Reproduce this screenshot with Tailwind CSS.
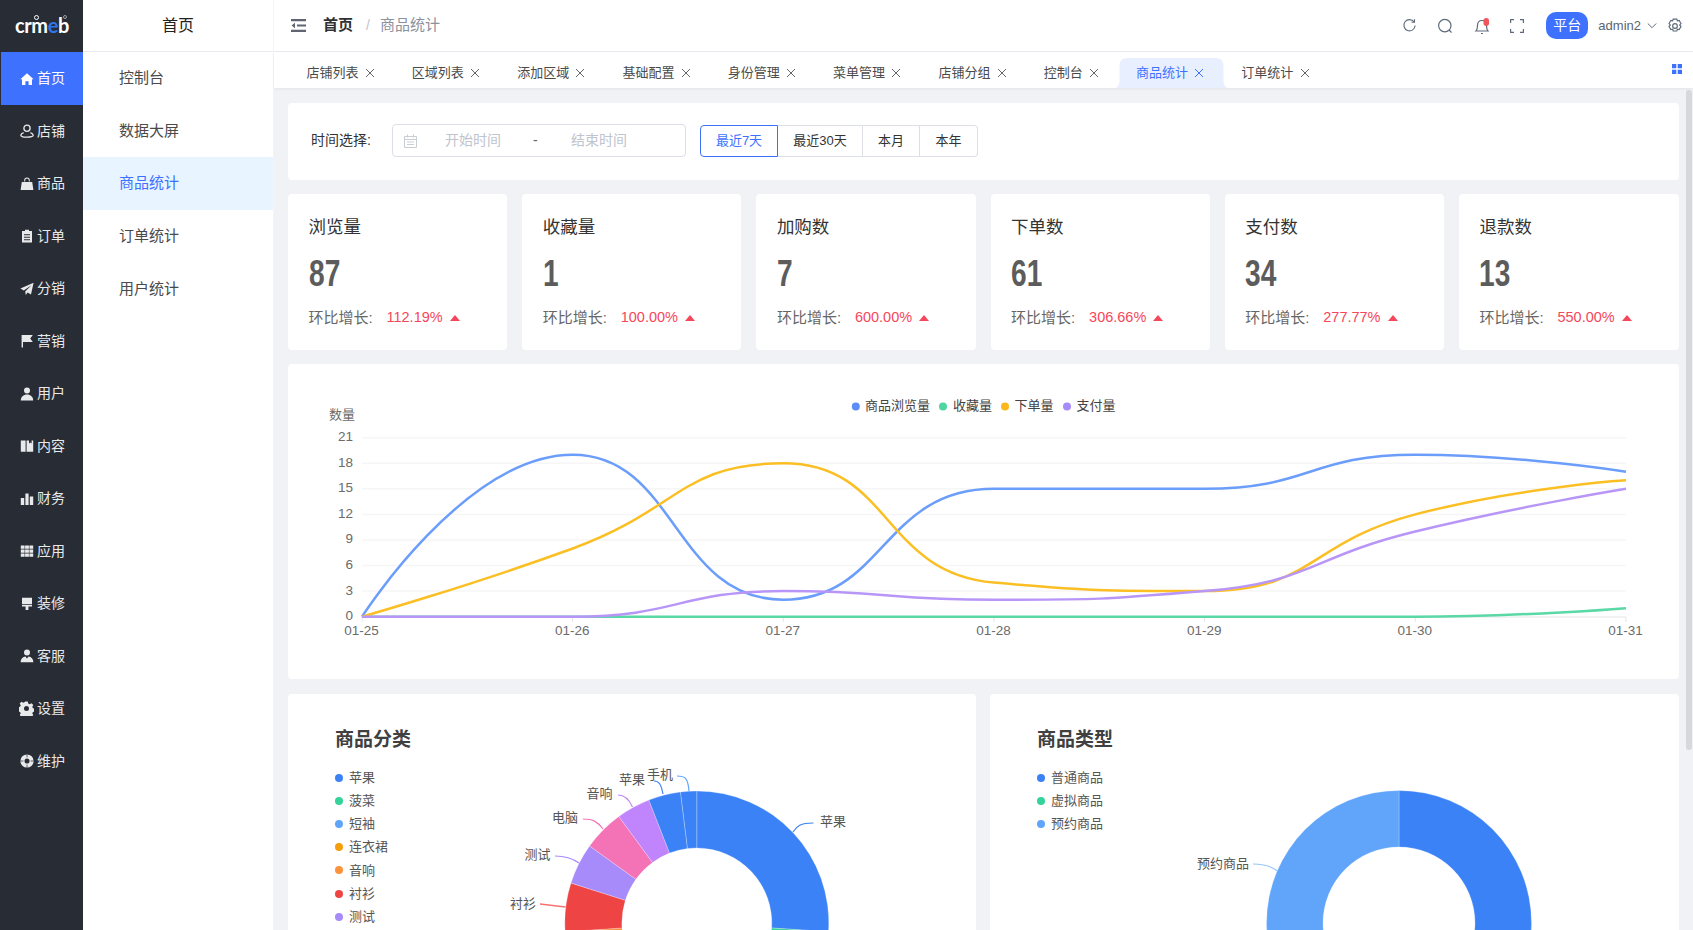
<!DOCTYPE html>
<html lang="zh">
<head>
<meta charset="utf-8">
<title>商品统计</title>
<script src="https://cdn.jsdelivr.net/npm/@tailwindcss/browser@4"></script>
</head>
<body class="m-0 h-[930px] w-[1693px] overflow-hidden bg-white font-['Liberation_Sans','Noto_Sans_CJK_SC',sans-serif] text-[14px] text-[#515a6e]">
<div class="flex h-[930px] w-[1693px]">

  <!-- primary sidebar -->
  <aside class="flex h-full w-[83px] shrink-0 flex-col bg-[#282c34] text-[14px] text-[#e8e9eb]">
    <div class="relative flex h-[52px] items-center pl-[15px] pb-[2px]">
      <span class="font-['Lato',sans-serif] text-[20px] leading-none font-bold tracking-[-0.4px] text-white">crm<span class="text-[#2f76e6]">e</span>b</span>
      <span class="absolute left-[34px] top-[15px] h-[5px] w-[5px] rounded-full border border-white"></span>
      <span class="absolute left-[63px] top-[15px] h-[4px] w-[4px] rounded-full border border-[#9aa0a8]"></span>
    </div>
    <a class="ml-px flex h-[53px] items-center gap-[3px] bg-[#3f71ff] pl-[19px] text-white">
      <svg class="h-[14px] w-[14px]" viewBox="0 0 14 14" fill="currentColor"><path d="M7 1.2 13.6 7.2H12V13H8.6V9.2H5.4V13H2V7.2H.4Z"/></svg><span>首页</span></a>
    <a class="flex h-[52.5px] items-center gap-[3px] pl-[20px]">
      <svg class="h-[14px] w-[14px]" viewBox="0 0 14 14" fill="none" stroke="currentColor" stroke-width="1.3"><circle cx="7" cy="4.2" r="3.1"/><path d="M3.6 8.6C1.5 9.4.8 10.4.8 11.2c0 1.2 2.6 1.9 6.2 1.9s6.2-.7 6.2-1.9c0-.8-.7-1.8-2.8-2.6"/></svg><span>店铺</span></a>
    <a class="flex h-[52.5px] items-center gap-[3px] pl-[20px]">
      <svg class="h-[14px] w-[14px]" viewBox="0 0 14 14" fill="currentColor"><path d="M4.2 4.6V3.4a2.8 2.8 0 0 1 5.6 0v1.2h-1V3.4a1.8 1.8 0 0 0-3.6 0v1.2ZM1.8 5h10.4l1.2 8H.6Z"/></svg><span>商品</span></a>
    <a class="flex h-[52.5px] items-center gap-[3px] pl-[20px]">
      <svg class="h-[14px] w-[14px]" viewBox="0 0 14 14" fill="currentColor"><path fill-rule="evenodd" d="M5 .8h4V2h3v11.6H2V2h3ZM4 5.2v1h6v-1Zm0 2.6v1h6v-1Zm0 2.4v1h6v-1Z"/></svg><span>订单</span></a>
    <a class="flex h-[52.5px] items-center gap-[3px] pl-[20px]">
      <svg class="h-[14px] w-[14px]" viewBox="0 0 14 14" fill="currentColor"><path d="M13.6.8 11 12.6 7.6 10.4 5.8 13 5.2 9.4 11.4 3.2 3.8 8.6.4 6.6Z"/></svg><span>分销</span></a>
    <a class="flex h-[52.5px] items-center gap-[3px] pl-[20px]">
      <svg class="h-[14px] w-[14px]" viewBox="0 0 14 14" fill="currentColor"><path d="M1.6 1h11.2l-2.6 3.6 2.6 3.4H3v5.4H1.6Z"/></svg><span>营销</span></a>
    <a class="flex h-[52.5px] items-center gap-[3px] pl-[20px]">
      <svg class="h-[14px] w-[14px]" viewBox="0 0 14 14" fill="currentColor"><circle cx="7" cy="3.6" r="3"/><path d="M.8 13.4c0-3.6 2.6-6 6.2-6s6.2 2.400 6.200 6Z"/></svg><span>用户</span></a>
    <a class="flex h-[52.5px] items-center gap-[3px] pl-[20px]">
      <svg class="h-[14px] w-[14px]" viewBox="0 0 14 14" fill="currentColor"><path d="M.8 1.400h4.800v11.400H.8ZM6.600 1.400H9v3l1.300-1 1.300 1v-3h1.600v11.400H6.600Z"/></svg><span>内容</span></a>
    <a class="flex h-[52.5px] items-center gap-[3px] pl-[20px]">
      <svg class="h-[14px] w-[14px]" viewBox="0 0 14 14" fill="currentColor"><path d="M.8 6h3.400v7H.8ZM5.400 1.400h3.200V13H5.400ZM9.800 4.400h3.400V13H9.800Z"/></svg><span>财务</span></a>
    <a class="flex h-[52.5px] items-center gap-[3px] pl-[20px]">
      <svg class="h-[14px] w-[14px]" viewBox="0 0 14 14" fill="currentColor"><path d="M.8 1.400h3.800v3.400H.8ZM5.100 1.400h3.800v3.400H5.100ZM9.400 1.400h3.800v3.400H9.400ZM.8 5.400h3.800v3.400H.8ZM5.100 5.400h3.800v3.400H5.100ZM9.400 5.400h3.800v3.400H9.400ZM.8 9.400h3.800v3.400H.8ZM5.100 9.400h3.800v3.400H5.100ZM9.400 9.400h3.800v3.400H9.400Z"/></svg><span>应用</span></a>
    <a class="flex h-[52.5px] items-center gap-[3px] pl-[20px]">
      <svg class="h-[14px] w-[14px]" viewBox="0 0 14 14" fill="currentColor"><path d="M2 .8h10v6.400H2ZM2 8h10v1.400H8.400V13H5.600V9.400H2Z"/></svg><span>装修</span></a>
    <a class="flex h-[52.5px] items-center gap-[3px] pl-[20px]">
      <svg class="h-[14px] w-[14px]" viewBox="0 0 14 14" fill="currentColor"><circle cx="7" cy="3.600" r="3"/><path d="M.6 13.200c0-3.400 2.200-5.400 4.800-5.800L7 9.400l1.600-2c2.600.4 4.800 2.400 4.800 5.800ZM6.500 10 7 9.600l.5.4.4 2.400H6.100Z"/></svg><span>客服</span></a>
    <a class="flex h-[52.5px] items-center gap-[3px] pl-[19px]">
      <svg class="h-[15px] w-[15px]" viewBox="0 0 15 15" fill="currentColor"><path fill-rule="evenodd" d="M6.200.5h2.600l.4 2 1.500.7 1.800-1 1.800 1.900-1 1.700.6 1.500 2 .5v2.600l-2 .5-.6 1.500 1 1.700-1.800 1.900-1.800-1-1.500.6-.4 2H6.200l-.4-2-1.500-.6-1.800 1-1.800-1.900 1-1.700-.6-1.500-2-.5V6.300l2-.5.6-1.500-1-1.700L2.500 .7l1.800 1 1.500-.7ZM7.500 5a2.500 2.500 0 1 0 0 5 2.500 2.500 0 0 0 0-5Z"/></svg><span>设置</span></a>
    <a class="flex h-[52.5px] items-center gap-[3px] pl-[20px]">
      <svg class="h-[14px] w-[14px]" viewBox="0 0 14 14"><circle cx="7" cy="7" r="6.600" fill="currentColor"/><circle cx="7" cy="7" r="2.500" fill="#282c34"/><path d="M7 .4v3M7 10.600v3M.4 7h3M10.600 7h3" stroke="#282c34" stroke-width=".7"/></svg><span>维护</span></a>
  </aside>

  <!-- secondary sidebar -->
  <aside class="flex h-full w-[190px] shrink-0 flex-col bg-white text-[15px] text-[#4a4a4a]">
    <div class="flex h-[52px] items-center justify-center border-b border-[#e9ebf0] text-[16px] text-[#222]">首页</div>
    <a class="flex h-[52.5px] items-center pl-[36px]">控制台</a>
    <a class="flex h-[52.5px] items-center pl-[36px] pt-[1px]">数据大屏</a>
    <a class="flex h-[53px] items-center bg-[#e8f4ff] pl-[36px] text-[#3f71ff]">商品统计</a>
    <a class="flex h-[52.5px] items-center pl-[36px]">订单统计</a>
    <a class="flex h-[52.5px] items-center pl-[36px]">用户统计</a>
  </aside>

  <!-- main -->
  <main class="relative flex h-full min-w-0 flex-1 flex-col border-l border-[#f3f4f6]">
    <header class="flex h-[52px] shrink-0 items-center border-b border-[#e9ebf0] pl-[17px] pr-[10px]">
      <svg class="h-[13px] w-[15px]" viewBox="0 0 15 13" fill="#5f6672"><path d="M0 0h15v2.200H0ZM6 5.400h9v2.200H6ZM0 10.800h15V13H0ZM4 3.700v5.600L.6 6.500Z"/></svg>
      <span class="ml-[17px] text-[15px] font-bold text-[#303133]">首页</span>
      <span class="ml-[13px] text-[14px] text-[#c0c4cc]">/</span>
      <span class="ml-[10px] text-[15px] text-[#8b929e]">商品统计</span>
      <div class="ml-auto flex items-center">
        <svg class="h-[15px] w-[15px]" viewBox="0 0 16 16" fill="none" stroke="#5f6b7a" stroke-width="1.200"><path d="M12.900 4.200A6 6 0 1 0 14 8"/><path d="M13.300 1.300v3.200h-3.200" /></svg>
        <svg class="ml-[20px] h-[16px] w-[16px]" viewBox="0 0 16 16" fill="none" stroke="#5f6b7a" stroke-width="1.200"><circle cx="7.800" cy="7.600" r="6.200"/><path d="m12.200 12 2.300 2.600"/></svg>
        <svg class="ml-[20px] h-[18px] w-[18px]" viewBox="0 0 18 18" fill="none"><path d="M3 14c1.200-1.300 1.500-2.500 1.500-5.500C4.500 5.500 6.300 3.500 9 3.500s4.500 2 4.500 5c0 3 .3 4.200 1.500 5.500Z" stroke="#5f6b7a" stroke-width="1.200"/><path d="M8 16.500h2" stroke="#5f6b7a" stroke-width="1.200"/><rect x="10.500" y="1" width="5.500" height="8" rx="2.750" fill="#f0545c"/></svg>
        <svg class="ml-[19px] h-[14px] w-[14px]" viewBox="0 0 14 14" fill="none" stroke="#5f6b7a" stroke-width="1.200"><path d="M.6 4V.6H4M10 .6h3.400V4M13.400 10v3.400H10M4 13.400H.6V10"/></svg>
        <span class="ml-[22px] flex h-[27px] w-[42px] items-center justify-center rounded-[10px] bg-[#3f71ff] text-[14px] text-white">平台</span>
        <span class="ml-[10px] text-[13px] text-[#5a6472]">admin2</span>
        <svg class="ml-[6px] h-[8px] w-[10px]" viewBox="0 0 10 8" fill="none" stroke="#5f6b7a" stroke-width="1"><path d="m.8 1.500 4.200 4.200 4.200-4.200"/></svg>
        <svg class="ml-[10px] h-[16px] w-[16px]" viewBox="0 0 15 15" fill="none" stroke="#5f6b7a" stroke-width="1.100"><path d="M5.800 1h3.400l.5 1.700 1.700-.4 1.700 2.900-1.200 1.300 1.200 1.500-1.700 2.900-1.700-.4-.5 1.700H5.800l-.5-1.700-1.700.4-1.700-2.900 1.200-1.500L1.900 5.200l1.700-2.900 1.700.4Z"/><circle cx="7.500" cy="7.500" r="2.200"/></svg>
      </div>
    </header>

    <nav class="relative z-10 flex h-[36px] shrink-0 bg-white pl-[15.500px] text-[13px] text-[#4a4a4a] shadow-[0_1px_3px_rgba(0,0,0,0.06)]">
      <a class="mt-[6px] flex h-[30px] items-center gap-[6.300px] pl-[17px] pr-[20px]">店铺列表<svg class="h-[10px] w-[10px]" viewBox="0 0 10 10" stroke="#666" stroke-width="1"><path d="m1 1 8 8M9 1 1 9"/></svg></a>
      <a class="mt-[6px] flex h-[30px] items-center gap-[6.300px] pl-[17px] pr-[20px]">区域列表<svg class="h-[10px] w-[10px]" viewBox="0 0 10 10" stroke="#666" stroke-width="1"><path d="m1 1 8 8M9 1 1 9"/></svg></a>
      <a class="mt-[6px] flex h-[30px] items-center gap-[6.300px] pl-[17px] pr-[20px]">添加区域<svg class="h-[10px] w-[10px]" viewBox="0 0 10 10" stroke="#666" stroke-width="1"><path d="m1 1 8 8M9 1 1 9"/></svg></a>
      <a class="mt-[6px] flex h-[30px] items-center gap-[6.300px] pl-[17px] pr-[20px]">基础配置<svg class="h-[10px] w-[10px]" viewBox="0 0 10 10" stroke="#666" stroke-width="1"><path d="m1 1 8 8M9 1 1 9"/></svg></a>
      <a class="mt-[6px] flex h-[30px] items-center gap-[6.300px] pl-[17px] pr-[20px]">身份管理<svg class="h-[10px] w-[10px]" viewBox="0 0 10 10" stroke="#666" stroke-width="1"><path d="m1 1 8 8M9 1 1 9"/></svg></a>
      <a class="mt-[6px] flex h-[30px] items-center gap-[6.300px] pl-[17px] pr-[20px]">菜单管理<svg class="h-[10px] w-[10px]" viewBox="0 0 10 10" stroke="#666" stroke-width="1"><path d="m1 1 8 8M9 1 1 9"/></svg></a>
      <a class="mt-[6px] flex h-[30px] items-center gap-[6.300px] pl-[17px] pr-[20px]">店铺分组<svg class="h-[10px] w-[10px]" viewBox="0 0 10 10" stroke="#666" stroke-width="1"><path d="m1 1 8 8M9 1 1 9"/></svg></a>
      <a class="mt-[6px] flex h-[30px] items-center gap-[6.300px] pl-[17px] pr-[20px]">控制台<svg class="h-[10px] w-[10px]" viewBox="0 0 10 10" stroke="#666" stroke-width="1"><path d="m1 1 8 8M9 1 1 9"/></svg></a>
      <a class="relative mt-[6px] flex h-[30px] items-center gap-[6.300px] pl-[17px] pr-[20px] text-[#3f71ff]">
        <svg class="absolute -left-[4px] top-0 h-[30px] w-[114px]" viewBox="0 0 114 30" fill="#e8efff"><path d="M0 30c3 0 4-3 4.500-7V8q0-8 8-8h88q8 0 8 8v15c.5 4 2 7 5.500 7Z"/></svg>
        <span class="relative">商品统计</span>
        <svg class="relative h-[10px] w-[10px]" viewBox="0 0 10 10" stroke="#3f71ff" stroke-width="1"><path d="m1 1 8 8M9 1 1 9"/></svg></a>
      <a class="mt-[6px] flex h-[30px] items-center gap-[6.300px] pl-[17px] pr-[20px]">订单统计<svg class="h-[10px] w-[10px]" viewBox="0 0 10 10" stroke="#666" stroke-width="1"><path d="m1 1 8 8M9 1 1 9"/></svg></a>
      <svg class="ml-auto mr-[11px] -mt-[2px] h-[10px] w-[10px] self-center" viewBox="0 0 10 10" fill="#3f71ff"><path d="M0 0h4.300v4.300H0ZM5.700 0H10v4.300H5.700ZM0 5.700h4.300V10H0ZM5.700 5.700H10V10H5.700Z"/></svg>
    </nav>

    <div class="flex min-h-0 flex-1 flex-col overflow-hidden bg-[#f0f2f5] pl-[14px] pr-[14px] pt-[15px]">
      <!-- filter -->
      <section class="flex h-[77px] shrink-0 items-center rounded-[4px] bg-white pb-[2px] pl-[23px]">
        <span class="w-[80.500px] text-[14px] text-[#333]">时间选择:</span>
        <div class="flex h-[33px] w-[294.500px] items-center rounded-[4px] border border-[#dcdfe6] pl-[11px] text-[14px] text-[#c0c4cc]">
          <svg class="h-[14px] w-[13px] shrink-0" viewBox="0 0 13 14" fill="none" stroke="#c9cdd4" stroke-width="1"><path d="M.5 2.500h12v11H.5ZM.5 5.500h12M3.500.5v3M9.500.5v3M3 8h7M3 10.500h7"/></svg>
          <span class="ml-[28.500px] w-[56px] shrink-0">开始时间</span>
          <span class="ml-[32px] w-[5px] shrink-0 text-[#606266]">-</span>
          <span class="ml-[33px] w-[56px] shrink-0">结束时间</span>
        </div>
        <div class="ml-[14px] flex h-[32px] text-[13px] text-[#333]">
          <span class="flex w-[78px] items-center justify-center rounded-l-[4px] border border-[#3f71ff] text-[#3f71ff]">最近7天</span>
          <span class="flex w-[85px] items-center justify-center border-y border-r border-[#dcdfe6]">最近30天</span>
          <span class="flex w-[57px] items-center justify-center border-y border-r border-[#dcdfe6]">本月</span>
          <span class="flex w-[58px] items-center justify-center rounded-r-[4px] border-y border-r border-[#dcdfe6]">本年</span>
        </div>
      </section>

      <!-- stats -->
      <section class="mt-[14px] grid h-[156px] shrink-0 grid-cols-[repeat(6,219.2px)] gap-[15px]">
        <div class="rounded-[4px] bg-white pl-[20.500px] pt-[21px]">
          <div class="text-[17.500px] leading-[24px] text-[#333]">浏览量</div>
          <div class="mt-[14.500px] origin-left scale-x-[0.76] font-['Liberation_Sans',sans-serif] text-[37px] leading-[40px] font-bold text-[#5c5c5c]">87</div>
          <div class="mt-[14.500px] flex h-[20px] items-center text-[#666]"><span class="w-[78px] text-[15px]">环比增长:</span><span class="text-[14.500px] text-[#f5475b]">112.19%</span><svg class="ml-[7px] h-[6px] w-[10px]" viewBox="0 0 10 6" fill="#f5475b"><path d="M5 0 10 6H0Z"/></svg></div>
        </div>
        <div class="rounded-[4px] bg-white pl-[20.500px] pt-[21px]">
          <div class="text-[17.500px] leading-[24px] text-[#333]">收藏量</div>
          <div class="mt-[14.500px] origin-left scale-x-[0.76] font-['Liberation_Sans',sans-serif] text-[37px] leading-[40px] font-bold text-[#5c5c5c]">1</div>
          <div class="mt-[14.500px] flex h-[20px] items-center text-[#666]"><span class="w-[78px] text-[15px]">环比增长:</span><span class="text-[14.500px] text-[#f5475b]">100.00%</span><svg class="ml-[7px] h-[6px] w-[10px]" viewBox="0 0 10 6" fill="#f5475b"><path d="M5 0 10 6H0Z"/></svg></div>
        </div>
        <div class="rounded-[4px] bg-white pl-[20.500px] pt-[21px]">
          <div class="text-[17.500px] leading-[24px] text-[#333]">加购数</div>
          <div class="mt-[14.500px] origin-left scale-x-[0.76] font-['Liberation_Sans',sans-serif] text-[37px] leading-[40px] font-bold text-[#5c5c5c]">7</div>
          <div class="mt-[14.500px] flex h-[20px] items-center text-[#666]"><span class="w-[78px] text-[15px]">环比增长:</span><span class="text-[14.500px] text-[#f5475b]">600.00%</span><svg class="ml-[7px] h-[6px] w-[10px]" viewBox="0 0 10 6" fill="#f5475b"><path d="M5 0 10 6H0Z"/></svg></div>
        </div>
        <div class="rounded-[4px] bg-white pl-[20.500px] pt-[21px]">
          <div class="text-[17.500px] leading-[24px] text-[#333]">下单数</div>
          <div class="mt-[14.500px] origin-left scale-x-[0.76] font-['Liberation_Sans',sans-serif] text-[37px] leading-[40px] font-bold text-[#5c5c5c]">61</div>
          <div class="mt-[14.500px] flex h-[20px] items-center text-[#666]"><span class="w-[78px] text-[15px]">环比增长:</span><span class="text-[14.500px] text-[#f5475b]">306.66%</span><svg class="ml-[7px] h-[6px] w-[10px]" viewBox="0 0 10 6" fill="#f5475b"><path d="M5 0 10 6H0Z"/></svg></div>
        </div>
        <div class="rounded-[4px] bg-white pl-[20.500px] pt-[21px]">
          <div class="text-[17.500px] leading-[24px] text-[#333]">支付数</div>
          <div class="mt-[14.500px] origin-left scale-x-[0.76] font-['Liberation_Sans',sans-serif] text-[37px] leading-[40px] font-bold text-[#5c5c5c]">34</div>
          <div class="mt-[14.500px] flex h-[20px] items-center text-[#666]"><span class="w-[78px] text-[15px]">环比增长:</span><span class="text-[14.500px] text-[#f5475b]">277.77%</span><svg class="ml-[7px] h-[6px] w-[10px]" viewBox="0 0 10 6" fill="#f5475b"><path d="M5 0 10 6H0Z"/></svg></div>
        </div>
        <div class="mr-[-1px] rounded-[4px] bg-white pl-[20.500px] pt-[21px]">
          <div class="text-[17.500px] leading-[24px] text-[#333]">退款数</div>
          <div class="mt-[14.500px] origin-left scale-x-[0.76] font-['Liberation_Sans',sans-serif] text-[37px] leading-[40px] font-bold text-[#5c5c5c]">13</div>
          <div class="mt-[14.500px] flex h-[20px] items-center text-[#666]"><span class="w-[78px] text-[15px]">环比增长:</span><span class="text-[14.500px] text-[#f5475b]">550.00%</span><svg class="ml-[7px] h-[6px] w-[10px]" viewBox="0 0 10 6" fill="#f5475b"><path d="M5 0 10 6H0Z"/></svg></div>
        </div>
      </section>

      <!-- line chart -->
      <section class="mt-[14px] h-[315px] shrink-0 rounded-[4px] bg-white">
        <svg class="block h-[315px] w-full" viewBox="288 364 1391 315" font-size="13.500" fill="#6b6b6b">
          <g stroke="#f6f6f7" stroke-width="1.500">
            <path d="M362 437.700H1626M362 463.300H1626M362 488.800H1626M362 514.400H1626M362 540H1626M362 565.500H1626M362 591.100H1626"/>
          </g>
          <path d="M362 617H1626M362 617v5M572.700 617v5M783.300 617v5M994 617v5M1204.700 617v5M1415.300 617v5M1626 617v5" stroke="#e4e6ea" fill="none"/>
          <text x="329" y="418.500" font-size="13">数量</text>
          <g text-anchor="end">
            <text x="353" y="441">21</text><text x="353" y="466.500">18</text><text x="353" y="492">15</text><text x="353" y="517.500">12</text><text x="353" y="543">9</text><text x="353" y="569">6</text><text x="353" y="594.500">3</text><text x="353" y="620">0</text>
          </g>
          <g text-anchor="middle">
            <text x="361.500" y="634.500">01-25</text><text x="572.200" y="634.500">01-26</text><text x="782.800" y="634.500">01-27</text><text x="993.500" y="634.500">01-28</text><text x="1204.200" y="634.500">01-29</text><text x="1414.800" y="634.500">01-30</text><text x="1625.500" y="634.500">01-31</text>
          </g>
          <g fill="none" stroke-width="2.500">
            <path id="l-blue" stroke="#6b9dfb"/>
            <path id="l-green" stroke="#5ad8a6"/>
            <path id="l-yellow" stroke="#fbbf24"/>
            <path id="l-purple" stroke="#b896f8"/>
          </g>
          <g font-size="13" fill="#444">
            <circle cx="855.800" cy="406.500" r="4" fill="#5b8cf8"/><text x="865" y="410">商品浏览量</text>
            <circle cx="943" cy="406.500" r="4" fill="#4fd6a0"/><text x="953" y="410">收藏量</text>
            <circle cx="1005" cy="406.500" r="4" fill="#fbb81c"/><text x="1014.500" y="410">下单量</text>
            <circle cx="1067" cy="406.500" r="4" fill="#a78bfa"/><text x="1076.500" y="410">支付量</text>
          </g>
        </svg>
      </section>

      <!-- donuts -->
      <section class="mt-[15px] grid h-[400px] shrink-0 grid-cols-[688px_689px] gap-[14px]">
        <div class="relative rounded-[4px] bg-white pl-[47px] pt-[34px]">
          <svg id="donut-a" class="absolute left-0 top-0 h-[400px] w-[688px]" viewBox="288 694 688 400" font-size="13" fill="#555">
            <g fill="none" stroke-width="1.200">
              <path stroke="#3b82f6" d="M793 832c4-6 7-9 20.500-9"/><path stroke="#60a5fa" d="M677 776c8 0 11 2 12 15"/>
              <path stroke="#3b82f6" d="M654 781c5 0 7 3 9 13"/><path stroke="#c084fc" d="M618 795c7 0 11 4 14.500 12"/>
              <path stroke="#f472b6" d="M583 819c10 0 15 3 20 10"/><path stroke="#a78bfa" d="M555 856c10 0 17 2 24 7"/>
              <path stroke="#f87171" d="M540 904l25.500 3" stroke-width="1.500"/>
            </g>
            <text x="820" y="825.500">苹果</text><text x="647" y="779">手机</text><text x="619" y="783.500">苹果</text><text x="586.500" y="797.500">音响</text><text x="552" y="821.500">电脑</text><text x="524.500" y="859">测试</text><text x="510" y="907.500">衬衫</text>
          </svg>
          <h3 class="relative text-[19px] leading-[24px] font-bold text-[#404040]">商品分类</h3>
          <ul class="relative mt-[14px] text-[13px] text-[#555]">
            <li class="flex h-[23.200px] items-center gap-[6px]"><i class="h-[8px] w-[8px] rounded-full bg-[#3b82f6]"></i>苹果</li>
            <li class="flex h-[23.200px] items-center gap-[6px]"><i class="h-[8px] w-[8px] rounded-full bg-[#34d399]"></i>菠菜</li>
            <li class="flex h-[23.200px] items-center gap-[6px]"><i class="h-[8px] w-[8px] rounded-full bg-[#60a5fa]"></i>短袖</li>
            <li class="flex h-[23.200px] items-center gap-[6px]"><i class="h-[8px] w-[8px] rounded-full bg-[#f59e0b]"></i>连衣裙</li>
            <li class="flex h-[23.200px] items-center gap-[6px]"><i class="h-[8px] w-[8px] rounded-full bg-[#fb923c]"></i>音响</li>
            <li class="flex h-[23.200px] items-center gap-[6px]"><i class="h-[8px] w-[8px] rounded-full bg-[#ef4444]"></i>衬衫</li>
            <li class="flex h-[23.200px] items-center gap-[6px]"><i class="h-[8px] w-[8px] rounded-full bg-[#a78bfa]"></i>测试</li>
          </ul>
        </div>
        <div class="relative rounded-[4px] bg-white pl-[47px] pt-[34px]">
          <svg id="donut-b" class="absolute left-0 top-0 h-[400px] w-[689px]" viewBox="990 694 689 400" font-size="13" fill="#555">
            <path fill="none" stroke="#93c5fd" stroke-width="1.200" d="M1253 864c11 0 18 2 24.500 7"/>
            <text x="1197" y="867.500">预约商品</text>
          </svg>
          <h3 class="relative text-[19px] leading-[24px] font-bold text-[#404040]">商品类型</h3>
          <ul class="relative mt-[14px] text-[13px] text-[#555]">
            <li class="flex h-[23.200px] items-center gap-[6px]"><i class="h-[8px] w-[8px] rounded-full bg-[#3b82f6]"></i>普通商品</li>
            <li class="flex h-[23.200px] items-center gap-[6px]"><i class="h-[8px] w-[8px] rounded-full bg-[#34d399]"></i>虚拟商品</li>
            <li class="flex h-[23.200px] items-center gap-[6px]"><i class="h-[8px] w-[8px] rounded-full bg-[#60a5fa]"></i>预约商品</li>
          </ul>
        </div>
      </section>
    </div>

    <!-- overlay scrollbar -->
    <div class="absolute left-[1412px] top-[90px] h-[660px] w-[6px] rounded-full bg-[#d6d8dc]"></div>
  </main>
</div>

<script>
  // Line chart: smoothing of each series from its data.
  var X0 = 362, STEP = 210.67, Y0 = 616.7, UNIT = 8.524, S = 0.5;
  function curve(values) {
    var p = values.map(function (v, i) { return [X0 + i * STEP, Y0 - v * UNIT]; });
    var d = 'M' + p[0][0] + ' ' + p[0][1], c0x = p[0][0], c0y = p[0][1];
    var mn = Math.min, mx = Math.max;
    for (var i = 1; i < p.length; i++) {
      var x = p[i][0], y = p[i][1], px = p[i - 1][0], py = p[i - 1][1], c1x = x, c1y = y, nx = x, ny = y;
      if (i < p.length - 1) {
        var qx = p[i + 1][0], qy = p[i + 1][1];
        var lp = Math.hypot(x - px, y - py), ln = Math.hypot(qx - x, qy - y), r = ln / (ln + lp);
        nx = x + (qx - px) * S * r; ny = y + (qy - py) * S * r;
        nx = mx(mn(nx, mx(qx, x)), mn(qx, x)); ny = mx(mn(ny, mx(qy, y)), mn(qy, y));
        c1x = x - (nx - x) * lp / ln; c1y = y - (ny - y) * lp / ln;
        c1x = mx(mn(c1x, mx(px, x)), mn(px, x)); c1y = mx(mn(c1y, mx(py, y)), mn(py, y));
        nx = x + (x - c1x) * ln / lp; ny = y + (y - c1y) * ln / lp;
      }
      d += 'C' + [c0x, c0y, c1x, c1y, x, y].map(function (n) { return n.toFixed(1); }).join(' ');
      c0x = nx; c0y = ny;
    }
    return d;
  }
  document.getElementById('l-blue').setAttribute('d', curve([0, 19, 2, 15, 15, 19, 17]));
  document.getElementById('l-green').setAttribute('d', curve([0, 0, 0, 0, 0, 0, 1]));
  document.getElementById('l-yellow').setAttribute('d', curve([0, 8, 18, 4, 3, 12, 16]));
  document.getElementById('l-purple').setAttribute('d', curve([0, 0, 3, 2, 3, 10, 15]));

  // Donuts: slices are [start angle, end angle, colour], clockwise from the top.
  function donut(id, cx, cy, R, r, slices) {
    var svg = document.getElementById(id), first = svg.firstChild;
    slices.forEach(function (s) {
      var a = (s[0] - 90) * Math.PI / 180, b = (s[1] - 90) * Math.PI / 180, big = s[1] - s[0] > 180 ? 1 : 0;
      var el = document.createElementNS('http://www.w3.org/2000/svg', 'path');
      el.setAttribute('d', 'M' + (cx + R * Math.cos(a)) + ' ' + (cy + R * Math.sin(a)) + 'A' + R + ' ' + R + ' 0 ' + big + ' 1 ' + (cx + R * Math.cos(b)) + ' ' + (cy + R * Math.sin(b)) + 'L' + (cx + r * Math.cos(b)) + ' ' + (cy + r * Math.sin(b)) + 'A' + r + ' ' + r + ' 0 ' + big + ' 0 ' + (cx + r * Math.cos(a)) + ' ' + (cy + r * Math.sin(a)) + 'Z');
      el.setAttribute('fill', s[2]);
      el.setAttribute('stroke', 'rgba(255,255,255,.35)');
      el.setAttribute('stroke-width', '0.7');
      svg.insertBefore(el, first);
    });
  }
  donut('donut-a', 696.8, 923, 132, 75, [
    [0, 93.8, '#3b82f6'], [93.8, 150, '#34d399'], [150, 200, '#60a5fa'], [200, 240, '#f59e0b'], [240, 266.2, '#fb923c'],
    [266.2, 287.6, '#ef4444'], [287.6, 305.7, '#a78bfa'], [305.7, 323.8, '#f472b6'], [323.8, 338.7, '#c084fc'],
    [338.7, 352.9, '#3b82f6'], [352.9, 360, '#3b82f6']
  ]);
  donut('donut-b', 1399, 923, 132.5, 76, [[0, 180, '#3b82f6'], [180, 360, '#60a5fa']]);
</script>
</body>
</html>
